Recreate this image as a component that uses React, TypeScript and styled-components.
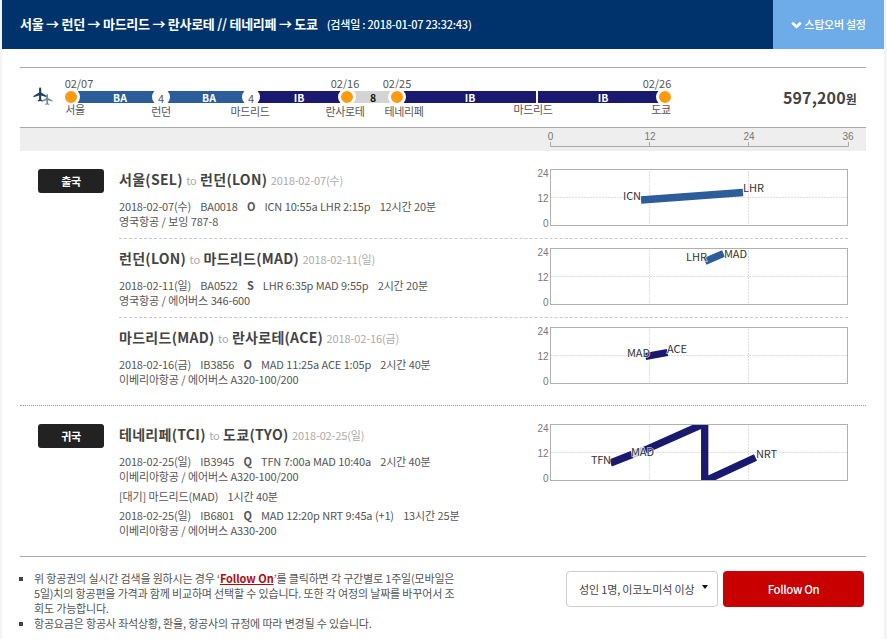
import React from 'react';
import styled, { createGlobalStyle } from 'styled-components';
import { MdFlight } from 'react-icons/md';

const GlobalStyle = createGlobalStyle`
  * { box-sizing: border-box; }
  body {
    margin: 0;
    background: #f4f4f4;
    color: #555;
    font-family: "Noto Sans CJK KR", "Noto Sans", sans-serif;
    font-size: 11px;
    line-height: 15px;
  }
`;

const Page = styled.main`
  width: 882px;
  height: 639px;
  margin-left: 2px;
  background: #fff;
  overflow: hidden;
`;

const Header = styled.header`
  display: flex;
  height: 49px;
  background: #00336b;
  color: #fff;
  white-space: nowrap;
`;

const Route = styled.h1`
  display: flex;
  align-items: center;
  flex: 1;
  margin: 0;
  padding: 0 0 2px 18px;
  font-size: 13px;
  font-weight: 700;
  letter-spacing: -0.27px;
`;

const SearchedAt = styled.span`
  margin-left: 9px;
  padding-top: 1px;
  font-size: 11px;
  font-weight: 500;
  letter-spacing: -0.23px;
`;

const StopoverButton = styled.button`
  display: flex;
  align-items: center;
  justify-content: center;
  gap: 2px;
  width: 111px;
  border: 0;
  padding: 0 0 1px;
  background: #6eace9;
  color: #fff;
  font: 500 11px "Noto Sans CJK KR", sans-serif;
  letter-spacing: -0.25px;
  svg { margin-top: 2px; }
`;

const Body = styled.div`
  padding: 18px 18px 0;
`;

const Summary = styled.section`
  display: flex;
  height: 61px;
  border-top: 1px solid #a5a9a8;
  border-bottom: 1px solid #a5a9a8;
`;

const PlaneMark = styled.div`
  display: flex;
  width: 51px;
  padding: 18px 0 0 12px;
  color: #1d4063;
  svg + svg {
    margin: 7px 0 0 -8px;
    color: #6f899f;
  }
`;

const Track = styled.div`
  display: grid;
  grid-template-columns: 90fr 90fr 96fr 50fr 140fr 128fr;
  grid-template-rows: 12px;
  width: 594px;
  height: 12px;
  margin-top: 23px;
`;

const Segment = styled.div<{ $tone: string; $nudge?: number }>`
  position: relative;
  display: flex;
  align-items: center;
  justify-content: center;
  padding: 2px 0 0 ${(p) => (p.$nudge ?? 0) * 2}px;
  background: ${(p) => p.$tone};
  color: #fff;
  font-size: 10.5px;
  font-weight: 700;
  line-height: 12px;
`;

const Layover = styled(Segment)`
  background-color: #d4d4d4;
  background-image: radial-gradient(#bdbdbd 35%, transparent 40%);
  background-size: 2px 2px;
  color: #111;
`;

const Stop = styled.div<{ $end?: boolean }>`
  position: absolute;
  z-index: 1;
  top: -14px;
  ${(p) => (p.$end ? 'right: -40px;' : 'left: -40px;')}
  width: 80px;
  height: 40px;
  color: #555;
  font-weight: 400;
  text-align: center;
`;

const StopDate = styled.span<{ $shift?: number }>`
  position: absolute;
  top: -1px;
  left: ${(p) => p.$shift ?? 0}px;
  width: 100%;
  line-height: 15px;
  font-size: 11px;
  letter-spacing: -0.05px;
`;

const StopName = styled(StopDate)<{ $drop?: number }>`
  top: ${(p) => 25 + (p.$drop ?? 0)}px;
  letter-spacing: -0.35px;
`;

const Dot = styled.i`
  position: absolute;
  top: 11px;
  left: 31px;
  width: 18px;
  height: 18px;
  border: 3px solid #fff;
  border-radius: 50%;
  background: #ff9b10;
`;

const Nights = styled.b`
  position: absolute;
  top: 11px;
  left: 31px;
  width: 18px;
  height: 18px;
  border-radius: 50%;
  background: #fff;
  font-size: 11px;
  font-weight: 400;
  line-height: 20px;
`;

const Tick = styled.i`
  position: absolute;
  top: 14px;
  left: 39px;
  width: 2px;
  height: 12px;
  background: #fff;
`;

const Price = styled.strong`
  flex: 1;
  padding: 19px 9px 0 0;
  text-align: right;
  color: #444;
  font-size: 16px;
  line-height: 20px;
  letter-spacing: 0.15px;
  small { font-size: 12px; }
`;

const ScaleBar = styled.div`
  display: flex;
  justify-content: flex-end;
  height: 23px;
  background: #eee;
`;

const Direction = styled.section<{ $last?: boolean }>`
  display: flex;
  height: ${(p) => (p.$last ? 151 : 255)}px;
  padding: 9px 18px 0;
  border-bottom: 1px ${(p) => (p.$last ? 'solid #a5a9a8' : 'dotted #999')};
`;

const DirectionTag = styled.div`
  width: 66px;
  height: 24px;
  margin: 9px 15px 0 0;
  border-radius: 3px;
  background: #222;
  color: #fff;
  font-weight: 700;
  line-height: 25px;
  letter-spacing: -0.4px;
  text-align: center;
`;

const Legs = styled.div`
  flex: 1;
`;

const LegRow = styled.article`
  display: flex;
  justify-content: space-between;
  height: 79px;
  white-space: nowrap;
  &:not(:last-child) { border-bottom: 1px dashed #c8c8c8; }
`;

const LegTitle = styled.h2`
  margin: 9px 0;
  color: #444;
  font-size: 14px;
  font-weight: 700;
  line-height: 20px;
  letter-spacing: 0.28px;
`;

const Muted = styled.span`
  color: #aaa;
  font-size: 11px;
  font-weight: 400;
  letter-spacing: -0.12px;
`;

const FlightLine = styled.div`
  display: flex;
  gap: 9.2px;
  letter-spacing: -0.15px;
  word-spacing: 0.2px;
`;

const Carrier = styled.div`
  letter-spacing: -0.16px;
  word-spacing: 0.3px;
`;

const Waiting = styled(FlightLine)`
  margin: 5px 0 4px;
`;

const ChartSvg = styled.svg`
  display: block;
  flex: none;
  margin-right: -18px;
`;

const Footer = styled.footer`
  display: flex;
  padding-top: 14px;
`;

const Notes = styled.ul`
  width: 436px;
  margin: 0 110px 0 0;
  padding: 0;
  list-style: none;
  white-space: nowrap;
`;

const Note = styled.li`
  display: flex;
  letter-spacing: -0.2px;
  word-spacing: 0.13px;
  &::before {
    content: "";
    width: 4px;
    height: 4px;
    margin: 6px 11px 0 -1px;
    background: #444;
  }
`;

const FollowLink = styled.a`
  color: #b00c0c;
  font-weight: 700;
  letter-spacing: -0.08px;
  text-decoration: underline;
`;

const Select = styled.button`
  display: flex;
  justify-content: space-between;
  width: 152px;
  height: 36px;
  margin-right: 5px;
  padding: 10px 9px 0 12px;
  border: 1px solid #ccc;
  border-radius: 4px;
  background: #fff;
  color: #444;
  font: 11px/15px "Noto Sans CJK KR", sans-serif;
  letter-spacing: -0.16px;
  white-space: nowrap;
`;

const Caret = styled.i`
  margin-top: 3px;
  border: solid transparent;
  border-width: 4px 3.5px 0;
  border-top-color: #111;
  height: 0;
`;

const FollowButton = styled.button`
  width: 141px;
  height: 36px;
  padding: 0;
  border: 0;
  border-radius: 4px;
  background: #c90000;
  color: #fff;
  font: 500 11.5px/35px "Noto Sans CJK KR", sans-serif;
  letter-spacing: -0.4px;
`;

const AxisText = styled.text`
  fill: #777;
  font: 10px "Liberation Sans", sans-serif;
`;

const AirportText = styled.text`
  fill: #333;
  stroke: #fff;
  stroke-width: 1.5px;
  stroke-opacity: 0.7;
  paint-order: stroke;
  font: 11px "Noto Sans CJK KR", sans-serif;
`;

const BLUE = '#2d5c9a';
const NAVY = '#19196f';

type Path = { points: string; tone: string };
type Label = { x: number; y: number; code: string; width: number };
type Leg = {
  id: string;
  from: string;
  to: string;
  date: string;
  flights: { cells: [string, string, string, string, string]; carrier: string; wait?: [string, string] }[];
  paths: Path[];
  labels: Label[];
};

// Chart coordinates: 99px per 12 hours across, 55px per day down.
const outbound: Leg[] = [
  {
    id: 'sel-lon', from: '서울(SEL)', to: '런던(LON)', date: '2018-02-07(수)',
    flights: [{ cells: ['2018-02-07(수)', 'BA0018', 'O', 'ICN 10:55a LHR 2:15p', '12시간 20분'], carrier: '영국항공 / 보잉 787-8' }],
    paths: [{ points: '111,40 213,32.5', tone: BLUE }],
    labels: [{ x: 93, y: 40, code: 'ICN', width: 18 }, { x: 213, y: 32, code: 'LHR', width: 21 }],
  },
  {
    id: 'lon-mad', from: '런던(LON)', to: '마드리드(MAD)', date: '2018-02-11(일)',
    flights: [{ cells: ['2018-02-11(일)', 'BA0522', 'S', 'LHR 6:35p MAD 9:55p', '2시간 20분'], carrier: '영국항공 / 에어버스 346-600' }],
    paths: [{ points: '175,22.5 193.5,14.5', tone: BLUE }],
    labels: [{ x: 156, y: 22, code: 'LHR', width: 21 }, { x: 194, y: 19, code: 'MAD', width: 23 }],
  },
  {
    id: 'mad-ace', from: '마드리드(MAD)', to: '란사로테(ACE)', date: '2018-02-16(금)',
    flights: [{ cells: ['2018-02-16(금)', 'IB3856', 'O', 'MAD 11:25a ACE 1:05p', '2시간 40분'], carrier: '이베리아항공 / 에어버스 A320-100/200' }],
    paths: [{ points: '115.5,38.5 137.5,34.5', tone: NAVY }],
    labels: [{ x: 97, y: 39, code: 'MAD', width: 23 }, { x: 137, y: 35, code: 'ACE', width: 20 }],
  },
];

const inbound: Leg[] = [
  {
    id: 'tci-tyo', from: '테네리페(TCI)', to: '도쿄(TYO)', date: '2018-02-25(일)',
    flights: [
      { cells: ['2018-02-25(일)', 'IB3945', 'Q', 'TFN 7:00a MAD 10:40a', '2시간 40분'], carrier: '이베리아항공 / 에어버스 A320-100/200', wait: ['[대기] 마드리드(MAD)', '1시간 40분'] },
      { cells: ['2018-02-25(일)', 'IB6801', 'Q', 'MAD 12:20p NRT 9:45a (+1)', '13시간 25분'], carrier: '이베리아항공 / 에어버스 A330-200' },
    ],
    paths: [
      { points: '101,40 117,34', tone: '#c4c4c4' },
      { points: '80.5,48 102,39.5', tone: NAVY },
      { points: '115,35 174.7,8.5 174.7,66 225.5,42.5', tone: NAVY },
    ],
    labels: [
      { x: 61, y: 49, code: 'TFN', width: 20 },
      { x: 101, y: 41, code: 'MAD', width: 23 },
      { x: 226, y: 43, code: 'NRT', width: 21 },
    ],
  },
];

const Chart = ({ leg }: { leg: Leg }) => (
  <ChartSvg width="336" height="74">
    <defs>
      <clipPath id={`plot-${leg.id}`}><rect x="21" y="10" width="296" height="55" /></clipPath>
    </defs>
    <AxisText x="18.5" y="16.5" textAnchor="end">24</AxisText>
    <AxisText x="18.5" y="41.5" textAnchor="end">12</AxisText>
    <AxisText x="18.5" y="67" textAnchor="end">0</AxisText>
    <path d="M119.5 11V65M218.5 11V65M21 37.5H317" stroke="#ddd" strokeDasharray="2 1" />
    <rect x="20.5" y="9.5" width="297" height="56" fill="none" stroke="#b0b0b0" />
    <g clipPath={`url(#plot-${leg.id})`} fill="none" strokeWidth="7.3">
      {leg.paths.map((p) => <polyline key={p.points} points={p.points} stroke={p.tone} />)}
    </g>
    {leg.labels.map((l) => (
      <AirportText key={l.code} x={l.x} y={l.y} textLength={l.width}>{l.code}</AirportText>
    ))}
  </ChartSvg>
);

const LegView = ({ leg }: { leg: Leg }) => (
  <LegRow>
    <div>
      <LegTitle>{leg.from} <Muted>to</Muted> {leg.to} <Muted>{leg.date}</Muted></LegTitle>
      {leg.flights.map(({ cells, carrier, wait }) => (
        <React.Fragment key={cells[1]}>
          <FlightLine>
            <span>{cells[0]}</span><span>{cells[1]}</span><b>{cells[2]}</b><span>{cells[3]}</span><span>{cells[4]}</span>
          </FlightLine>
          <Carrier>{carrier}</Carrier>
          {wait && <Waiting><span>{wait[0]}</span><span>{wait[1]}</span></Waiting>}
        </React.Fragment>
      ))}
    </div>
    <Chart leg={leg} />
  </LegRow>
);

export default function App() {
  return (
    <>
      <GlobalStyle />
      <Page>
        <Header>
          <Route>
            서울 → 런던 → 마드리드 → 란사로테 // 테네리페 → 도쿄
            <SearchedAt>(검색일 : 2018-01-07 23:32:43)</SearchedAt>
          </Route>
          <StopoverButton>
            <svg width="11" height="8" viewBox="0 0 11 8">
              <path d="M1.2 1.7 5.5 5.7 9.8 1.7" fill="none" stroke="currentColor" strokeWidth="2.7" />
            </svg>
            스탑오버 설정
          </StopoverButton>
        </Header>
        <Body>
          <Summary>
            <PlaneMark><MdFlight size={17} /><MdFlight size={13} /></PlaneMark>
            <Track>
              <Segment $tone={BLUE} $nudge={4}>
                <Stop><StopDate $shift={8}>02/07</StopDate><Dot /><StopName $shift={4}>서울</StopName></Stop>BA
              </Segment>
              <Segment $tone={BLUE} $nudge={3}>
                <Stop><Nights>4</Nights><StopName $drop={2}>런던</StopName></Stop>BA
              </Segment>
              <Segment $tone={NAVY}>
                <Stop><Nights>4</Nights><StopName $drop={2} $shift={-1}>마드리드</StopName></Stop>IB
              </Segment>
              <Layover $tone="#d4d4d4" $nudge={1}>
                <Stop><StopDate $shift={-2}>02/16</StopDate><Dot /><StopName $drop={2} $shift={-2}>란사로테</StopName></Stop>8
              </Layover>
              <Segment $tone={NAVY} $nudge={3}>
                <Stop><StopDate>02/25</StopDate><Dot /><StopName $drop={2} $shift={7}>테네리페</StopName></Stop>IB
              </Segment>
              <Segment $tone={NAVY} $nudge={2}>
                <Stop><Tick /><StopName $shift={-4}>마드리드</StopName></Stop>IB
                <Stop $end><StopDate $shift={-8}>02/26</StopDate><Dot /><StopName $shift={-4}>도쿄</StopName></Stop>
              </Segment>
            </Track>
            <Price>597,200<small>원</small></Price>
          </Summary>
          <ScaleBar>
            <svg width="346" height="23">
              <path d="M30.5 14V18.5H328.5V14M129.5 14V18M228.5 14V18" fill="none" stroke="#aaa" />
              <AxisText x="30.5" y="12" textAnchor="middle">0</AxisText>
              <AxisText x="130" y="12" textAnchor="middle">12</AxisText>
              <AxisText x="229" y="12" textAnchor="middle">24</AxisText>
              <AxisText x="328" y="12" textAnchor="middle">36</AxisText>
            </svg>
          </ScaleBar>
          <Direction>
            <DirectionTag>출국</DirectionTag>
            <Legs>{outbound.map((leg) => <LegView key={leg.id} leg={leg} />)}</Legs>
          </Direction>
          <Direction $last>
            <DirectionTag>귀국</DirectionTag>
            <Legs>{inbound.map((leg) => <LegView key={leg.id} leg={leg} />)}</Legs>
          </Direction>
          <Footer>
            <Notes>
              <Note>
                <span>
                  위 항공권의 실시간 검색을 원하시는 경우 ‘<FollowLink>Follow On</FollowLink>’를 클릭하면 각 구간별로 1주일(모바일은<br />
                  5일)치의 항공편을 가격과 함께 비교하며 선택할 수 있습니다. 또한 각 여정의 날짜를 바꾸어서 조<br />
                  회도 가능합니다.
                </span>
              </Note>
              <Note><span>항공요금은 항공사 좌석상황, 환율, 항공사의 규정에 따라 변경될 수 있습니다.</span></Note>
            </Notes>
            <Select>성인 1명, 이코노미석 이상<Caret /></Select>
            <FollowButton>Follow On</FollowButton>
          </Footer>
        </Body>
      </Page>
    </>
  );
}
